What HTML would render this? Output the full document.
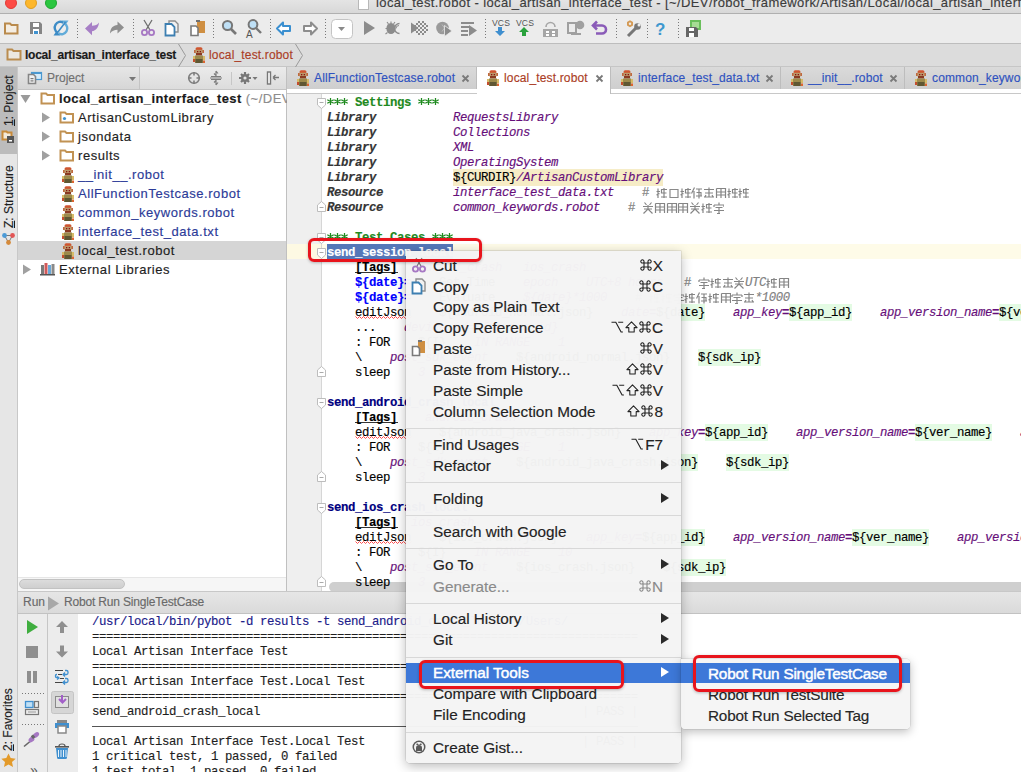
<!DOCTYPE html><html><head><meta charset="utf-8"><style>
*{box-sizing:border-box}
html,body{margin:0;padding:0}
body{width:1021px;height:772px;overflow:hidden;position:relative;background:#ececec;font-family:"Liberation Sans",sans-serif;color:#1e1e1e}
.a{position:absolute}
.ui{font-family:"Liberation Sans",sans-serif;font-size:13px;letter-spacing:.55px;white-space:pre;line-height:19px;-webkit-text-stroke:.15px currentColor}
.mono{font-family:"Liberation Mono",monospace;font-size:11.67px;line-height:15px;white-space:pre}
.ln{position:absolute;height:15px;line-height:15px;white-space:pre;font-family:"Liberation Mono",monospace;font-size:12.35px;letter-spacing:-.41px;color:#000;-webkit-text-stroke:.15px currentColor}
.h{color:#1f8a1f;font-weight:bold}
.kw{color:#353535;font-weight:bold;font-style:italic}
.ar{color:#660e7a;font-style:italic}
.cm{color:#808080}
.tc{color:#000080;font-weight:bold}
.tg{font-weight:bold}
.vb{color:#0000ff;font-weight:bold}
.gv{background:#e4fbe4}
.eq{color:#660e7a;font-weight:bold}
.cd{background:#f6ecc6}
.wv{}
.cj{display:inline-block;width:11.75px;height:11px;vertical-align:-1px;position:relative}
.cj:before{content:"";position:absolute;left:1px;right:1px;top:1px;bottom:0;border:1px solid #9a9a9a;border-left-width:1px;opacity:.85;background:linear-gradient(#9a9a9a,#9a9a9a) 50% 0/1px 100% no-repeat,linear-gradient(#9a9a9a,#9a9a9a) 0 45%/100% 1px no-repeat}
.menu{font-family:"Liberation Sans",sans-serif;font-size:15.3px;letter-spacing:0px;white-space:pre;color:#262626;-webkit-text-stroke:.15px currentColor}
</style></head><body>
<div class="a" style="left:0;top:0;width:1021px;height:14px;background:linear-gradient(#e4e4e4,#d8d8d8);border-bottom:1px solid #b0b0b0;overflow:hidden"><div class="a" style="left:5px;top:-3px;width:12px;height:12px;border-radius:6px;background:#fd4b45;border:.5px solid #df3b35"></div><div class="a" style="left:25px;top:-3px;width:12px;height:12px;border-radius:6px;background:#fdb72c;border:.5px solid #de9d22"></div><div class="a" style="left:45px;top:-3px;width:12px;height:12px;border-radius:6px;background:#2bc640;border:.5px solid #1fa52f"></div><div class="a" style="left:358px;top:-2px;width:11px;height:12px;background:#fff;border:1px solid #b8b8b8"></div><div class="a ui" style="left:376px;top:-7px;font-size:13px;letter-spacing:.39px;color:#3c3c3c">local_test.robot - local_artisan_interface_test - [~/DEV/robot_framework/Artisan/Local/local_artisan_interface_test]</div></div>
<div class="a" style="left:0;top:14px;width:1021px;height:30px;background:#ececec;border-bottom:1px solid #bdbdbd"></div>
<svg class="a" style="left:0;top:14px" width="1021" height="29"><path d="M5 9.5h5l1.5 1.5h6v8.5H5z" fill="#f4ede2" stroke="#b98a4c" stroke-width="2"/><path d="M30 8h10l2 2v10H30z" fill="#858585"/><rect x="33" y="9" width="6" height="4" fill="#fff"/><rect x="33" y="15" width="6" height="5" fill="#fff"/><rect x="34" y="17" width="4" height="3" fill="#3f92cf"/><path d="M63.5 8.6A5.6 5.6 0 0 0 57.5 18.5" fill="none" stroke="#3d8cc6" stroke-width="2.4"/><path d="M58.5 19.4A5.6 5.6 0 0 0 64.5 9.5" fill="none" stroke="#62acd9" stroke-width="2.4"/><path d="M62 6.5h6.5l-3 4.5z" fill="#62acd9"/><path d="M60 21.5h-6.5l3-4.5z" fill="#3d8cc6"/><path d="M65.5 8l-9 12" stroke="#3d8cc6" stroke-width="1.6"/><line x1="77.5" y1="5" x2="77.5" y2="26" stroke="#7a7a7a" stroke-width="1" stroke-dasharray="1 2"/><path d="M85 14.5l7-6.5v3.8c3.2 0 5.6-1.2 7-3.3-.4 4.8-3 8.2-7 8.8v4z" fill="#a77fc6"/><path d="M124 13.5l-6.5-6v3.5c-4.5.3-7.2 3.2-7.5 8.5 1.8-2.6 4.4-3.8 7.5-3.8v3.8z" fill="#8f8f8f"/><line x1="133.5" y1="5" x2="133.5" y2="26" stroke="#7a7a7a" stroke-width="1" stroke-dasharray="1 2"/><path d="M144 6l6 10M152 6l-6 10" stroke="#6f6f6f" stroke-width="1.3"/><circle cx="144.5" cy="18.5" r="2.6" fill="none" stroke="#a678c3" stroke-width="1.8"/><circle cx="151.5" cy="18.5" r="2.6" fill="none" stroke="#a678c3" stroke-width="1.8"/><path d="M169 7h6l3 3v8h-9z" fill="#f1f1f1" stroke="#8e8e8e" stroke-width="1.4"/><path d="M165.5 10h6l3 3v8.5h-9z" fill="#fff" stroke="#3d7fb1" stroke-width="1.8"/><rect x="197" y="7" width="8" height="12" fill="#cf8f42"/><rect x="196" y="6" width="4" height="2" fill="#707070"/><path d="M191 12h5l2 2v7.5h-7z" fill="#fff" stroke="#7a7a7a" stroke-width="1.6"/><line x1="213.5" y1="5" x2="213.5" y2="26" stroke="#7a7a7a" stroke-width="1" stroke-dasharray="1 2"/><circle cx="227.5" cy="11.5" r="4.6" fill="#bfe0f6" stroke="#777" stroke-width="2"/><path d="M231 15l5 5" stroke="#777" stroke-width="2.6"/><circle cx="253" cy="10.5" r="4.4" fill="#bfe0f6" stroke="#777" stroke-width="2"/><path d="M256 14l5 5" stroke="#777" stroke-width="2.4"/><text x="246" y="23.5" font-family="Liberation Sans" font-size="10" fill="#555">A</text><line x1="270.5" y1="5" x2="270.5" y2="26" stroke="#7a7a7a" stroke-width="1" stroke-dasharray="1 2"/><path d="M277 14.5l6-6v3.5h7v5h-7v3.5z" fill="#fff" stroke="#3a8fd0" stroke-width="2" stroke-linejoin="round"/><path d="M317 14.5l-6-6v3.5h-7v5h7v3.5z" fill="#fff" stroke="#8d8d8d" stroke-width="2" stroke-linejoin="round"/><line x1="325.5" y1="5" x2="325.5" y2="26" stroke="#7a7a7a" stroke-width="1" stroke-dasharray="1 2"/><rect x="331.5" y="5.5" width="21" height="19" rx="4" fill="#fff" stroke="#c4c4c4"/><path d="M338 13h7l-3.5 4z" fill="#8a8a8a"/><path d="M364 7l11 7-11 7z" fill="#8c8c8c"/><ellipse cx="391" cy="14.5" rx="4.6" ry="5.6" fill="#8c8c8c"/><path d="M387 8l1.5 2M395 8l-1.5 2M385.5 14.5h2M385.5 20l2-1.5M391 7.5v2" stroke="#8c8c8c" stroke-width="1.1"/><path d="M399.5 9.5a5 5 0 0 0 0 10" fill="none" stroke="#8c8c8c" stroke-width="1.4"/><path d="M396 14.5a3 3 0 0 1 3-3" fill="none" stroke="#8c8c8c" stroke-width="1"/><path d="M411 8.5l7.5 5.5-7.5 5.5z" fill="#8c8c8c"/><rect x="414" y="11" width="2" height="2" fill="#8c8c8c"/><rect x="414" y="15" width="2" height="2" fill="#8c8c8c"/><rect x="416" y="9" width="2" height="2" fill="#8c8c8c"/><rect x="416" y="13" width="2" height="2" fill="#8c8c8c"/><rect x="416" y="17" width="2" height="2" fill="#8c8c8c"/><rect x="418" y="7" width="2" height="2" fill="#8c8c8c"/><rect x="418" y="11" width="2" height="2" fill="#8c8c8c"/><rect x="418" y="15" width="2" height="2" fill="#8c8c8c"/><rect x="418" y="19" width="2" height="2" fill="#8c8c8c"/><rect x="420" y="9" width="2" height="2" fill="#8c8c8c"/><rect x="420" y="13" width="2" height="2" fill="#8c8c8c"/><rect x="420" y="17" width="2" height="2" fill="#8c8c8c"/><rect x="422" y="7" width="2" height="2" fill="#8c8c8c"/><rect x="422" y="11" width="2" height="2" fill="#8c8c8c"/><rect x="422" y="15" width="2" height="2" fill="#8c8c8c"/><rect x="422" y="19" width="2" height="2" fill="#8c8c8c"/><rect x="424" y="9" width="2" height="2" fill="#8c8c8c"/><rect x="424" y="13" width="2" height="2" fill="#8c8c8c"/><rect x="424" y="17" width="2" height="2" fill="#8c8c8c"/><rect x="426" y="11" width="2" height="2" fill="#8c8c8c"/><rect x="426" y="15" width="2" height="2" fill="#8c8c8c"/><circle cx="442.5" cy="14" r="6.3" fill="#9a9a9a"/><path d="M442 10.5l2.5 3.5-2.5 3.5" stroke="#bdbdbd" stroke-width="1" fill="none"/><path d="M444.5 11.5l7.5 5.5-7.5 5.5z" fill="#8c8c8c" stroke="#ececec" stroke-width=".8"/><path d="M461 8h13v2h-13zM461 12h9v2h-9zM461 16h7v2h-7zM461 20h7v2h-7z" fill="#8c8c8c"/><path d="M469 11l8 5.5-8 5.5z" fill="#8c8c8c"/><line x1="485.5" y1="5" x2="485.5" y2="26" stroke="#7a7a7a" stroke-width="1" stroke-dasharray="1 2"/><text x="492" y="11.5" font-family="Liberation Sans" font-size="8.6" fill="#555" letter-spacing=".1">VCS</text><path d="M498 13h4v4h3l-5 5-5-5h3z" fill="#3f8fcf"/><text x="516" y="11.5" font-family="Liberation Sans" font-size="8.6" fill="#555" letter-spacing=".1">VCS</text><path d="M522 22h4v-4h3l-5-5-5 5h3z" fill="#2aa23d"/><path d="M543 15h15v8h-15z" fill="#a6a6a6"/><rect x="546" y="17" width="3" height="2" fill="#fff"/><rect x="552" y="17" width="3" height="2" fill="#fff"/><rect x="546" y="20" width="3" height="2" fill="#fff"/><rect x="552" y="20" width="3" height="2" fill="#fff"/><path d="M546 13a4 4 0 0 1 9 0" fill="none" stroke="#a6a6a6" stroke-width="1.6"/><path d="M568 9h8v10h-8z" fill="none" stroke="#a0a0a0" stroke-width="2"/><path d="M571 20h10" stroke="#a0a0a0" stroke-width="2"/><circle cx="580" cy="11" r="4.3" fill="#a0a0a0"/><path d="M597 7.5l-4 4 4 4M594 11.5h8a4 4 0 0 1 0 8h-6" fill="none" stroke="#8a5bb8" stroke-width="2.6"/><line x1="616.5" y1="5" x2="616.5" y2="26" stroke="#7a7a7a" stroke-width="1" stroke-dasharray="1 2"/><path d="M627 8l3-1.7 3 1.7v3.5l-3 1.7-3-1.7z" fill="#d49a55"/><circle cx="630" cy="9.7" r="1.2" fill="#ececec"/><path d="M628 22l9-9" stroke="#777" stroke-width="3"/><circle cx="637.5" cy="12.5" r="3.3" fill="#777"/><circle cx="639" cy="11" r="1.5" fill="#ececec"/><line x1="647.5" y1="5" x2="647.5" y2="26" stroke="#7a7a7a" stroke-width="1" stroke-dasharray="1 2"/><text x="655" y="20.5" font-family="Liberation Sans" font-size="17" font-weight="bold" fill="#3e98cf">?</text><line x1="678.5" y1="5" x2="678.5" y2="26" stroke="#7a7a7a" stroke-width="1" stroke-dasharray="1 2"/><rect x="690" y="6" width="11" height="10" fill="#6abf5c"/><rect x="692" y="8" width="7" height="6" fill="#a7dd95"/><path d="M686 13h10l2 2v8h-12z" fill="#666"/><rect x="689" y="14" width="5" height="3" fill="#fff"/><rect x="689" y="19" width="5" height="4" fill="#fff"/></svg>
<svg width="0" height="0" style="position:absolute"><defs>
<g id="rb">
<rect x="3.5" y="0.3" width="7" height="3.5" rx="1.7" fill="#cf5530"/>
<rect x="2" y="3" width="2" height="3" fill="#c0683f"/><rect x="10" y="3" width="2" height="3" fill="#c0683f"/>
<rect x="3.5" y="2.8" width="7" height="3.7" fill="#b99a6c"/>
<rect x="5" y="4" width="1.3" height="1.3" fill="#8a1010"/><rect x="7.7" y="4" width="1.3" height="1.3" fill="#8a1010"/>
<rect x="4" y="6" width="6" height="2.5" fill="#8a3a22"/>
<rect x="3" y="8.5" width="8" height="7.5" fill="#9c8a4c"/>
<rect x="3.5" y="12" width="7" height="4" fill="#5f5733"/>
<rect x="1" y="9" width="2" height="3" fill="#d6bb68"/><rect x="1" y="12" width="2" height="3" fill="#c44d2e"/>
<rect x="11" y="9" width="2" height="4" fill="#d6bb68"/><rect x="11" y="13.5" width="2" height="2.5" fill="#de6530"/>
</g>
<g id="cT1"><path d="M2 1.5v9.5M0.5 4.5h3.5M0.5 8l3-1.5M5 2.5h6M5.5 6h5M5 10h6M8 1v10M5.5 2.5v4" fill="none" stroke="#858585" stroke-width="1.2"/></g>
<g id="cT2"><path d="M1.5 1.5h9v9.5M1.5 1.5v9.5M1.5 5h9M1.5 8h9M6 1.5v9.5" fill="none" stroke="#858585" stroke-width="1.2"/></g>
<g id="cT0"><path d="M2 2.5h8v8h-8z" fill="none" stroke="#8a8a8a" stroke-width="1.2"/></g>
<g id="cT3"><path d="M1 2.5h10M2 6h8M1 10h10M6 0.5v10M3 8l-1.5 2.5M9 8l1.5 2.5" fill="none" stroke="#858585" stroke-width="1.2"/></g>
<g id="cT4"><path d="M3.5 0.5l-3 6M3 4v7.5M5 2h6M5.5 5.5h5M8 2v9.5M5 9h6M10 5.5v4" fill="none" stroke="#858585" stroke-width="1.2"/></g>
<g id="cT5"><path d="M6 0.5v2M1 3h10M1 3v2M11 3v2M2.5 5.5h7M6 5.5v6M1 8.5h10M4 11.5h3" fill="none" stroke="#858585" stroke-width="1.2"/></g>
<g id="cT6"><path d="M2.5 0.5l2 2.5M9.5 0.5l-2 2.5M1 4.5h10M2 7h8M6 3v4M1.5 11.5l4.5-4.5 4.5 4.5" fill="none" stroke="#858585" stroke-width="1.2"/></g>
<g id="fold"><path d="M1.5 1.5h8v6.5l-4 3.5-4-3.5z" fill="#fff" stroke="#bdbdbd"/><path d="M3.5 5.5h4" stroke="#aaa"/></g>
<g id="foldend"><path d="M1.5 12.5h8v-6.5l-4-3.5-4 3.5z" fill="#fff" stroke="#bdbdbd"/><path d="M3.5 8.5h4" stroke="#aaa"/></g>
</defs></svg>
<div class="a" style="left:0;top:44px;width:1021px;height:23px;background:#dcdcdc;border-bottom:1px solid #c6c6c6"></div>
<svg class="a" style="left:0;top:43px" width="320" height="24"><path d="M7.5 6.5h4.5l1.5 1.5h7v8.5H7.5z" fill="#ece8e0" stroke="#ba8c4f" stroke-width="2"/><path d="M178.5 1l7 11.5-7 11.5" fill="none" stroke="#9a9a9a"/><path d="M295.5 1l7 11.5-7 11.5" fill="none" stroke="#9a9a9a"/></svg>
<div class="a ui" style="left:25px;top:46px;font-weight:bold;font-size:12px;letter-spacing:-.25px;color:#1a1a1a">local_artisan_interface_test</div>
<svg class="a" style="left:192px;top:47px" width="14" height="16"><use href="#rb"/></svg>
<div class="a ui" style="left:209px;top:46px;font-size:12px;letter-spacing:.16px;color:#ab3d26">local_test.robot</div>
<div class="a" style="left:0;top:67px;width:18px;height:705px;background:#e6e6e6;border-right:1px solid #c8c8c8"></div>
<div class="a" style="left:0;top:67px;width:17px;height:87px;background:#bcbcbc"></div>
<div class="a ui" style="left:1px;top:126px;transform-origin:0 0;transform:rotate(-90deg);font-size:12px;letter-spacing:0px;line-height:16px;color:#1e1e1e"><u>1</u>: Project</div>
<svg class="a" style="left:1px;top:129px" width="16" height="16"><path d="M1.5 2.5h4l1 1h4v7h-9z" fill="#f3eada" stroke="#c78a3a" stroke-width="2"/><rect x="6" y="7" width="7" height="7" fill="#555"/><rect x="8" y="11" width="3" height="1.5" fill="#fff"/></svg>
<div class="a ui" style="left:1px;top:228px;transform-origin:0 0;transform:rotate(-90deg);font-size:12px;letter-spacing:0px;line-height:16px;color:#1e1e1e"><u>Z</u>: Structure</div>
<svg class="a" style="left:1px;top:231px" width="15" height="15"><path d="M3.5 4.5h8M3.5 4.5l4 7 4-7" fill="none" stroke="#777" stroke-width="1"/><circle cx="3.5" cy="4.5" r="2.4" fill="#4a9ad6"/><circle cx="11.5" cy="4.5" r="2.4" fill="#e25555"/><circle cx="7.5" cy="11.5" r="2.4" fill="#d58a3a"/></svg>
<div class="a ui" style="left:0px;top:751px;transform-origin:0 0;transform:rotate(-90deg);font-size:12px;letter-spacing:0px;line-height:16px;color:#1e1e1e"><u>2</u>: Favorites</div>
<svg class="a" style="left:1px;top:753px" width="15" height="15"><path d="M7.5 0.5l2.2 4.6 5 .6-3.7 3.4 1 5-4.5-2.5-4.5 2.5 1-5L.3 5.7l5-.6z" fill="#e39a2a"/></svg>
<div class="a" style="left:18px;top:67px;width:269px;height:525px;background:#fff;border-right:1px solid #c0c0c0"></div>
<div class="a" style="left:18px;top:67px;width:268px;height:23px;background:linear-gradient(#ebebeb,#dcdcdc);border-bottom:1px solid #c4c4c4"></div>
<div class="a" style="left:18px;top:67px;width:122px;height:23px;background:linear-gradient(#e6e6e6,#d6d6d6);border-right:1px solid #c4c4c4;border-bottom:1px solid #c4c4c4"></div>
<svg class="a" style="left:18px;top:67px" width="268" height="23"><rect x="13.5" y="5.5" width="10" height="7" fill="#d4ebfa" stroke="#4a98d0" stroke-width="1.2"/><rect x="13.5" y="5" width="10" height="2" fill="#4a98d0"/><path d="M10.5 7.5h5l2 2v7h-7z" fill="#f2f2f2" stroke="#858585" stroke-width="1.6"/><rect x="12.5" y="11" width="3" height="1.2" fill="#777"/><rect x="12.5" y="13.3" width="3" height="1.2" fill="#777"/><path d="M111 10h7l-3.5 4z" fill="#777"/><circle cx="176" cy="11" r="5.3" fill="none" stroke="#7d7d7d" stroke-width="1.6"/><path d="M176 5v3.5M176 13.5v3.5M170 11h3.5M178.5 11h3.5" stroke="#7d7d7d" stroke-width="1.6"/><path d="M192 11h12M198 4v4.5l-2-2M198 4l2 2.5M198 18v-4.5l-2 2M198 18l2-2.5" stroke="#7d7d7d" stroke-width="1.2" fill="none"/><path d="M193 9.5h10M193 12.5h10" stroke="#7d7d7d" stroke-width="1"/><path d="M213.5 5v13" stroke="#c6c6c6"/><circle cx="227" cy="11" r="4" fill="#777"/><path d="M227 5v12M221 11h12M223 7l8 8M231 7l-8 8" stroke="#777" stroke-width="2.2"/><circle cx="227" cy="11" r="1.6" fill="#e2e2e2"/><path d="M234.5 10h5l-2.5 3z" fill="#777"/><rect x="249.5" y="5" width="3" height="12" fill="#fff" stroke="#777" stroke-width="1.4"/><path d="M255 10.5h6M255 10.5l2.5-2.5M255 10.5l2.5 2.5" stroke="#777" stroke-width="1.3" fill="none"/></svg>
<div class="a ui" style="left:47px;top:69px;font-size:12px;letter-spacing:0px;color:#707070">Project</div>
<div class="a" style="left:18px;top:241px;width:268px;height:19px;background:#d5d5d5"></div>
<svg class="a" style="left:20px;top:94px" width="11" height="10"><path d="M0.5 1h10l-5 8z" fill="#9a9a9a"/></svg>
<svg class="a" style="left:40px;top:91px" width="16" height="14"><path d="M1.5 2.5h4.5l1.5 1.5h6.5v8.5H1.5z" fill="#fff" stroke="#c19253" stroke-width="2"/></svg>
<div class="a ui" style="left:59px;top:89px;font-weight:bold;letter-spacing:.41px;color:#1a1a1a">local_artisan_interface_test<span style="font-weight:normal;color:#8d8d8d;letter-spacing:.5px;margin-left:4px">(~/DEV</span></div>
<svg class="a" style="left:41px;top:112px" width="10" height="11"><path d="M1 0.5v10l8-5z" fill="#a0a0a0"/></svg>
<svg class="a" style="left:59px;top:110px" width="16" height="14"><path d="M1.5 2.5h4.5l1.5 1.5h6.5v8.5H1.5z" fill="#fff" stroke="#c19253" stroke-width="2"/><circle cx="5.5" cy="8.5" r="1.6" fill="#3f93cf"/></svg>
<div class="a ui" style="left:78px;top:108px;color:#1e1e1e">ArtisanCustomLibrary</div>
<svg class="a" style="left:41px;top:131px" width="10" height="11"><path d="M1 0.5v10l8-5z" fill="#a0a0a0"/></svg>
<svg class="a" style="left:59px;top:129px" width="16" height="14"><path d="M1.5 2.5h4.5l1.5 1.5h6.5v8.5H1.5z" fill="#fff" stroke="#c19253" stroke-width="2"/></svg>
<div class="a ui" style="left:78px;top:127px;color:#1e1e1e">jsondata</div>
<svg class="a" style="left:41px;top:150px" width="10" height="11"><path d="M1 0.5v10l8-5z" fill="#a0a0a0"/></svg>
<svg class="a" style="left:59px;top:148px" width="16" height="14"><path d="M1.5 2.5h4.5l1.5 1.5h6.5v8.5H1.5z" fill="#fff" stroke="#c19253" stroke-width="2"/></svg>
<div class="a ui" style="left:78px;top:146px;color:#1e1e1e">results</div>
<svg class="a" style="left:61px;top:167px" width="14" height="16"><use href="#rb"/></svg>
<div class="a ui" style="left:78px;top:165px;color:#2c3b98">__init__.robot</div>
<svg class="a" style="left:61px;top:186px" width="14" height="16"><use href="#rb"/></svg>
<div class="a ui" style="left:78px;top:184px;color:#2c3b98">AllFunctionTestcase.robot</div>
<svg class="a" style="left:61px;top:205px" width="14" height="16"><use href="#rb"/></svg>
<div class="a ui" style="left:78px;top:203px;color:#2c3b98">common_keywords.robot</div>
<svg class="a" style="left:61px;top:224px" width="14" height="16"><use href="#rb"/></svg>
<div class="a ui" style="left:78px;top:222px;color:#2c3b98">interface_test_data.txt</div>
<svg class="a" style="left:61px;top:243px" width="14" height="16"><use href="#rb"/></svg>
<div class="a ui" style="left:78px;top:241px;color:#1e1e1e">local_test.robot</div>
<svg class="a" style="left:22px;top:264px" width="10" height="11"><path d="M1 0.5v10l8-5z" fill="#a0a0a0"/></svg>
<svg class="a" style="left:40px;top:262px" width="16" height="14"><rect x="1" y="3" width="3" height="10" fill="#7a7a7a"/><rect x="4.5" y="1" width="3" height="12" fill="#d25a5a"/><rect x="8" y="3" width="3" height="10" fill="#6aa8d8"/><rect x="11.5" y="2" width="3" height="11" fill="#8a8a8a"/><rect x="0" y="12" width="15" height="1.5" fill="#555"/></svg>
<div class="a ui" style="left:59px;top:260px;color:#1e1e1e">External Libraries</div>
<div class="a" style="left:18px;top:577px;width:268px;height:14px;background:#f6f6f6;border-top:1px solid #e6e6e6"></div>
<div class="a" style="left:19px;top:579px;width:106px;height:10px;border-radius:5px;background:linear-gradient(#dcdcdc,#cfcfcf);border:1px solid #c2c2c2"></div>
<div class="a" style="left:287px;top:67px;width:734px;height:27px;background:#d3d3d3"></div>
<div class="a" style="left:287px;top:89px;width:734px;height:5px;background:#fff;border-bottom:1px solid #c8c8c8"></div>
<div class="a" style="left:287px;top:67px;width:190px;height:22px;background:linear-gradient(#dadada,#cecece);border-right:1px solid #bdbdbd"></div>
<svg class="a" style="left:296px;top:70px" width="14" height="16"><use href="#rb"/></svg>
<div class="a ui" style="left:314px;top:69px;font-size:12px;letter-spacing:.15px;color:#2f52c0">AllFunctionTestcase.robot</div>
<svg class="a" style="left:461px;top:74px" width="9" height="9"><path d="M1.5 1.5l6 6M7.5 1.5l-6 6" stroke="#7a7a7a" stroke-width="1.8"/></svg>
<div class="a" style="left:477px;top:67px;width:134px;height:27px;background:#ffffff;border-right:1px solid #bdbdbd"></div>
<svg class="a" style="left:486px;top:70px" width="14" height="16"><use href="#rb"/></svg>
<div class="a ui" style="left:504px;top:69px;font-size:12px;letter-spacing:.15px;color:#ab3d26">local_test.robot</div>
<svg class="a" style="left:595px;top:74px" width="9" height="9"><path d="M1.5 1.5l6 6M7.5 1.5l-6 6" stroke="#7a7a7a" stroke-width="1.8"/></svg>
<div class="a" style="left:611px;top:67px;width:170px;height:22px;background:linear-gradient(#dadada,#cecece);border-right:1px solid #bdbdbd"></div>
<svg class="a" style="left:620px;top:70px" width="14" height="16"><use href="#rb"/></svg>
<div class="a ui" style="left:638px;top:69px;font-size:12px;letter-spacing:.15px;color:#2f52c0">interface_test_data.txt</div>
<svg class="a" style="left:765px;top:74px" width="9" height="9"><path d="M1.5 1.5l6 6M7.5 1.5l-6 6" stroke="#7a7a7a" stroke-width="1.8"/></svg>
<div class="a" style="left:781px;top:67px;width:124px;height:22px;background:linear-gradient(#dadada,#cecece);border-right:1px solid #bdbdbd"></div>
<svg class="a" style="left:790px;top:70px" width="14" height="16"><use href="#rb"/></svg>
<div class="a ui" style="left:808px;top:69px;font-size:12px;letter-spacing:.15px;color:#2f52c0">__init__.robot</div>
<svg class="a" style="left:889px;top:74px" width="9" height="9"><path d="M1.5 1.5l6 6M7.5 1.5l-6 6" stroke="#7a7a7a" stroke-width="1.8"/></svg>
<div class="a" style="left:905px;top:67px;width:155px;height:22px;background:linear-gradient(#dadada,#cecece);border-right:1px solid #bdbdbd"></div>
<svg class="a" style="left:914px;top:70px" width="14" height="16"><use href="#rb"/></svg>
<div class="a ui" style="left:932px;top:69px;font-size:12px;letter-spacing:.15px;color:#2f52c0">common_keywords.robot</div>
<div class="a" style="left:287px;top:94px;width:734px;height:498px;background:#fff"></div>
<div class="a" style="left:287px;top:94px;width:35px;height:498px;background:#efefef;border-right:1px solid #d6d6d6"></div>
<div class="a" style="left:287px;top:244px;width:34px;height:15px;background:#fdf9e3"></div>
<div class="a" style="left:322px;top:244px;width:699px;height:15px;background:#fefbe8"></div>
<svg class="a" style="left:327px;top:94px" width="21" height="15"><path d="M3.5 3.9v7.2M0.2999999999999998 5.7l6.4 3.6M0.2999999999999998 9.3l6.4-3.6M10.5 3.9v7.2M7.3 5.7l6.4 3.6M7.3 9.3l6.4-3.6M17.5 3.9v7.2M14.3 5.7l6.4 3.6M14.3 9.3l6.4-3.6" stroke="#1f8a1f" stroke-width="1.25" fill="none"/></svg>
<svg class="a" style="left:418px;top:94px" width="21" height="15"><path d="M3.5 3.9v7.2M0.2999999999999998 5.7l6.4 3.6M0.2999999999999998 9.3l6.4-3.6M10.5 3.9v7.2M7.3 5.7l6.4 3.6M7.3 9.3l6.4-3.6M17.5 3.9v7.2M14.3 5.7l6.4 3.6M14.3 9.3l6.4-3.6" stroke="#1f8a1f" stroke-width="1.25" fill="none"/></svg>
<div class="a" style="left:453px;top:169px;width:63px;height:15px;background:#f6edc8"></div>
<div class="a" style="left:516px;top:169px;width:147px;height:15px;background:#f6edc8"></div>
<svg class="a" style="left:327px;top:229px" width="21" height="15"><path d="M3.5 3.9v7.2M0.2999999999999998 5.7l6.4 3.6M0.2999999999999998 9.3l6.4-3.6M10.5 3.9v7.2M7.3 5.7l6.4 3.6M7.3 9.3l6.4-3.6M17.5 3.9v7.2M14.3 5.7l6.4 3.6M14.3 9.3l6.4-3.6" stroke="#1f8a1f" stroke-width="1.25" fill="none"/></svg>
<svg class="a" style="left:432px;top:229px" width="21" height="15"><path d="M3.5 3.9v7.2M0.2999999999999998 5.7l6.4 3.6M0.2999999999999998 9.3l6.4-3.6M10.5 3.9v7.2M7.3 5.7l6.4 3.6M7.3 9.3l6.4-3.6M17.5 3.9v7.2M14.3 5.7l6.4 3.6M14.3 9.3l6.4-3.6" stroke="#1f8a1f" stroke-width="1.25" fill="none"/></svg>
<div class="a" style="left:327px;top:244px;width:126px;height:15px;background:#5577b8"></div>
<div class="a" style="left:439px;top:304px;width:154px;height:15px;background:#e3fbe3"></div>
<div class="a" style="left:656px;top:304px;width:49px;height:15px;background:#e3fbe3"></div>
<div class="a" style="left:789px;top:304px;width:63px;height:15px;background:#e3fbe3"></div>
<div class="a" style="left:999px;top:304px;width:77px;height:15px;background:#e3fbe3"></div>
<div class="a" style="left:516px;top:349px;width:154px;height:15px;background:#e3fbe3"></div>
<div class="a" style="left:698px;top:349px;width:63px;height:15px;background:#e3fbe3"></div>
<div class="a" style="left:439px;top:424px;width:182px;height:15px;background:#e3fbe3"></div>
<div class="a" style="left:705px;top:424px;width:63px;height:15px;background:#e3fbe3"></div>
<div class="a" style="left:915px;top:424px;width:77px;height:15px;background:#e3fbe3"></div>
<div class="a" style="left:516px;top:454px;width:182px;height:15px;background:#e3fbe3"></div>
<div class="a" style="left:726px;top:454px;width:63px;height:15px;background:#e3fbe3"></div>
<div class="a" style="left:439px;top:529px;width:119px;height:15px;background:#e3fbe3"></div>
<div class="a" style="left:642px;top:529px;width:63px;height:15px;background:#e3fbe3"></div>
<div class="a" style="left:852px;top:529px;width:77px;height:15px;background:#e3fbe3"></div>
<div class="a" style="left:516px;top:559px;width:119px;height:15px;background:#e3fbe3"></div>
<div class="a" style="left:663px;top:559px;width:63px;height:15px;background:#e3fbe3"></div>
<svg class="a" style="left:355px;top:304px" width="57" height="15"><polyline points="0.5,12.5 2.5,14.5 4.5,12.5 6.5,14.5 8.5,12.5 10.5,14.5 12.5,12.5 14.5,14.5 16.5,12.5 18.5,14.5 20.5,12.5 22.5,14.5 24.5,12.5 26.5,14.5 28.5,12.5 30.5,14.5 32.5,12.5 34.5,14.5 36.5,12.5 38.5,14.5 40.5,12.5 42.5,14.5 44.5,12.5 46.5,14.5 48.5,12.5 50.5,14.5 52.5,12.5 54.5,14.5 56.5,12.5" fill="none" stroke="#ff4d4d" stroke-width="1"/></svg>
<svg class="a" style="left:355px;top:424px" width="57" height="15"><polyline points="0.5,12.5 2.5,14.5 4.5,12.5 6.5,14.5 8.5,12.5 10.5,14.5 12.5,12.5 14.5,14.5 16.5,12.5 18.5,14.5 20.5,12.5 22.5,14.5 24.5,12.5 26.5,14.5 28.5,12.5 30.5,14.5 32.5,12.5 34.5,14.5 36.5,12.5 38.5,14.5 40.5,12.5 42.5,14.5 44.5,12.5 46.5,14.5 48.5,12.5 50.5,14.5 52.5,12.5 54.5,14.5 56.5,12.5" fill="none" stroke="#ff4d4d" stroke-width="1"/></svg>
<svg class="a" style="left:355px;top:529px" width="57" height="15"><polyline points="0.5,12.5 2.5,14.5 4.5,12.5 6.5,14.5 8.5,12.5 10.5,14.5 12.5,12.5 14.5,14.5 16.5,12.5 18.5,14.5 20.5,12.5 22.5,14.5 24.5,12.5 26.5,14.5 28.5,12.5 30.5,14.5 32.5,12.5 34.5,14.5 36.5,12.5 38.5,14.5 40.5,12.5 42.5,14.5 44.5,12.5 46.5,14.5 48.5,12.5 50.5,14.5 52.5,12.5 54.5,14.5 56.5,12.5" fill="none" stroke="#ff4d4d" stroke-width="1"/></svg>
<div class="a" style="left:355px;top:272px;width:43px;height:1px;background:#333"></div>
<div class="a" style="left:355px;top:422px;width:43px;height:1px;background:#333"></div>
<div class="a" style="left:355px;top:527px;width:43px;height:1px;background:#333"></div>
<div class="a" style="left:329px;top:582px;width:692px;height:10px;background:#cfcfcf;border-radius:5px 0 0 5px"></div>
<div class="ln h" style="left:327.0px;top:96px;">    Settings    </div>
<div class="ln kw" style="left:327.0px;top:111px;">Library</div>
<div class="ln ar" style="left:453.0px;top:111px;">RequestsLibrary</div>
<div class="ln kw" style="left:327.0px;top:126px;">Library</div>
<div class="ln ar" style="left:453.0px;top:126px;">Collections</div>
<div class="ln kw" style="left:327.0px;top:141px;">Library</div>
<div class="ln ar" style="left:453.0px;top:141px;">XML</div>
<div class="ln kw" style="left:327.0px;top:156px;">Library</div>
<div class="ln ar" style="left:453.0px;top:156px;">OperatingSystem</div>
<div class="ln kw" style="left:327.0px;top:171px;">Library</div>
<div class="ln cd" style="left:453.0px;top:171px;">${CURDIR}</div>
<div class="ln ar cd" style="left:516.0px;top:171px;">/ArtisanCustomLibrary</div>
<div class="ln kw" style="left:327.0px;top:186px;">Resource</div>
<div class="ln ar" style="left:453.0px;top:186px;">interface_test_data.txt</div>
<div class="ln cm" style="left:642.0px;top:186px;"># <svg width="11.75" height="15" style="vertical-align:top"><g transform="translate(0 1)"><use href="#cT1"/></g></svg><svg width="11.75" height="15" style="vertical-align:top"><g transform="translate(0 1)"><use href="#cT0"/></g></svg><svg width="11.75" height="15" style="vertical-align:top"><g transform="translate(0 1)"><use href="#cT1"/></g></svg><svg width="11.75" height="15" style="vertical-align:top"><g transform="translate(0 1)"><use href="#cT4"/></g></svg><svg width="11.75" height="15" style="vertical-align:top"><g transform="translate(0 1)"><use href="#cT3"/></g></svg><svg width="11.75" height="15" style="vertical-align:top"><g transform="translate(0 1)"><use href="#cT2"/></g></svg><svg width="11.75" height="15" style="vertical-align:top"><g transform="translate(0 1)"><use href="#cT1"/></g></svg><svg width="11.75" height="15" style="vertical-align:top"><g transform="translate(0 1)"><use href="#cT1"/></g></svg></div>
<div class="ln kw" style="left:327.0px;top:201px;">Resource</div>
<div class="ln ar" style="left:453.0px;top:201px;">common_keywords.robot</div>
<div class="ln cm" style="left:628.0px;top:201px;"># <svg width="11.75" height="15" style="vertical-align:top"><g transform="translate(0 1)"><use href="#cT6"/></g></svg><svg width="11.75" height="15" style="vertical-align:top"><g transform="translate(0 1)"><use href="#cT2"/></g></svg><svg width="11.75" height="15" style="vertical-align:top"><g transform="translate(0 1)"><use href="#cT2"/></g></svg><svg width="11.75" height="15" style="vertical-align:top"><g transform="translate(0 1)"><use href="#cT2"/></g></svg><svg width="11.75" height="15" style="vertical-align:top"><g transform="translate(0 1)"><use href="#cT6"/></g></svg><svg width="11.75" height="15" style="vertical-align:top"><g transform="translate(0 1)"><use href="#cT1"/></g></svg><svg width="11.75" height="15" style="vertical-align:top"><g transform="translate(0 1)"><use href="#cT5"/></g></svg></div>
<div class="ln h" style="left:327.0px;top:231px;">    Test Cases    </div>
<div class="ln tc" style="left:327.0px;top:246px;color:#fff">send_session_local</div>
<div class="ln tg" style="left:355.0px;top:261px;">[Tags]</div>
<div class="ln ar" style="left:411.0px;top:261px;">android_crash</div>
<div class="ln ar" style="left:523.0px;top:261px;">ios_crash</div>
<div class="ln vb" style="left:355.0px;top:276px;">${date}=</div>
<div class="ln " style="left:439.0px;top:276px;">Get Time</div>
<div class="ln ar" style="left:523.0px;top:276px;">epoch</div>
<div class="ln ar" style="left:586.0px;top:276px;">UTC+8 hours</div>
<div class="ln cm" style="left:684.0px;top:276px;"># <svg width="11.75" height="15" style="vertical-align:top"><g transform="translate(0 1)"><use href="#cT5"/></g></svg><svg width="11.75" height="15" style="vertical-align:top"><g transform="translate(0 1)"><use href="#cT1"/></g></svg><svg width="11.75" height="15" style="vertical-align:top"><g transform="translate(0 1)"><use href="#cT3"/></g></svg><svg width="11.75" height="15" style="vertical-align:top"><g transform="translate(0 1)"><use href="#cT6"/></g></svg><i>UTC</i><svg width="11.75" height="15" style="vertical-align:top"><g transform="translate(0 1)"><use href="#cT1"/></g></svg><svg width="11.75" height="15" style="vertical-align:top"><g transform="translate(0 1)"><use href="#cT2"/></g></svg></div>
<div class="ln vb" style="left:355.0px;top:291px;">${date}=</div>
<div class="ln " style="left:439.0px;top:291px;">Evaluate</div>
<div class="ln ar" style="left:523.0px;top:291px;">${date}*1000</div>
<div class="ln cm" style="left:635.0px;top:291px;"># <svg width="11.75" height="15" style="vertical-align:top"><g transform="translate(0 1)"><use href="#cT1"/></g></svg><svg width="11.75" height="15" style="vertical-align:top"><g transform="translate(0 1)"><use href="#cT1"/></g></svg><svg width="11.75" height="15" style="vertical-align:top"><g transform="translate(0 1)"><use href="#cT5"/></g></svg><svg width="11.75" height="15" style="vertical-align:top"><g transform="translate(0 1)"><use href="#cT1"/></g></svg><svg width="11.75" height="15" style="vertical-align:top"><g transform="translate(0 1)"><use href="#cT4"/></g></svg><svg width="11.75" height="15" style="vertical-align:top"><g transform="translate(0 1)"><use href="#cT1"/></g></svg><svg width="11.75" height="15" style="vertical-align:top"><g transform="translate(0 1)"><use href="#cT2"/></g></svg><svg width="11.75" height="15" style="vertical-align:top"><g transform="translate(0 1)"><use href="#cT5"/></g></svg><svg width="11.75" height="15" style="vertical-align:top"><g transform="translate(0 1)"><use href="#cT3"/></g></svg><i>*1000</i></div>
<div class="ln wv" style="left:355.0px;top:306px;">editJson</div>
<div class="ln gv" style="left:439.0px;top:306px;">${android_normal.json}</div>
<div class="ln ar" style="left:621.0px;top:306px;">date</div>
<div class="ln eq" style="left:649.0px;top:306px;">=</div>
<div class="ln gv" style="left:656.0px;top:306px;">${date}</div>
<div class="ln ar" style="left:733.0px;top:306px;">app_key</div>
<div class="ln eq" style="left:782.0px;top:306px;">=</div>
<div class="ln gv" style="left:789.0px;top:306px;">${app_id}</div>
<div class="ln ar" style="left:880.0px;top:306px;">app_version_name</div>
<div class="ln eq" style="left:992.0px;top:306px;">=</div>
<div class="ln gv" style="left:999.0px;top:306px;">${ver_name}</div>
<div class="ln " style="left:355.0px;top:321px;">...</div>
<div class="ln ar" style="left:404.0px;top:321px;">device_id=${device_id}</div>
<div class="ln " style="left:355.0px;top:336px;">: FOR</div>
<div class="ln " style="left:418.0px;top:336px;">${I}</div>
<div class="ln ar" style="left:474.0px;top:336px;">IN RANGE</div>
<div class="ln ar" style="left:558.0px;top:336px;">1</div>
<div class="ln " style="left:355.0px;top:351px;">\</div>
<div class="ln ar" style="left:390.0px;top:351px;">post_sdk_event</div>
<div class="ln gv" style="left:516.0px;top:351px;">${android_normal.json}</div>
<div class="ln gv" style="left:698.0px;top:351px;">${sdk_ip}</div>
<div class="ln " style="left:355.0px;top:366px;">sleep</div>
<div class="ln ar" style="left:418.0px;top:366px;">3</div>
<div class="ln tc" style="left:327.0px;top:396px;">send_android_crash_local</div>
<div class="ln tg" style="left:355.0px;top:411px;">[Tags]</div>
<div class="ln ar" style="left:425.0px;top:411px;">android_crash</div>
<div class="ln wv" style="left:355.0px;top:426px;">editJson</div>
<div class="ln gv" style="left:439.0px;top:426px;">${android_java_crash.json}</div>
<div class="ln ar" style="left:649.0px;top:426px;">app_key</div>
<div class="ln eq" style="left:698.0px;top:426px;">=</div>
<div class="ln gv" style="left:705.0px;top:426px;">${app_id}</div>
<div class="ln ar" style="left:796.0px;top:426px;">app_version_name</div>
<div class="ln eq" style="left:908.0px;top:426px;">=</div>
<div class="ln gv" style="left:915.0px;top:426px;">${ver_name}</div>
<div class="ln ar" style="left:1020.0px;top:426px;">app_version_code</div>
<div class="ln " style="left:355.0px;top:441px;">: FOR</div>
<div class="ln " style="left:418.0px;top:441px;">${I}</div>
<div class="ln ar" style="left:474.0px;top:441px;">IN RANGE</div>
<div class="ln ar" style="left:558.0px;top:441px;">1</div>
<div class="ln " style="left:355.0px;top:456px;">\</div>
<div class="ln ar" style="left:390.0px;top:456px;">post_sdk_event</div>
<div class="ln gv" style="left:516.0px;top:456px;">${android_java_crash.json}</div>
<div class="ln gv" style="left:726.0px;top:456px;">${sdk_ip}</div>
<div class="ln " style="left:355.0px;top:471px;">sleep</div>
<div class="ln ar" style="left:418.0px;top:471px;">3</div>
<div class="ln tc" style="left:327.0px;top:501px;">send_ios_crash_local</div>
<div class="ln tg" style="left:355.0px;top:516px;">[Tags]</div>
<div class="ln ar" style="left:411.0px;top:516px;">ios_crash</div>
<div class="ln wv" style="left:355.0px;top:531px;">editJson</div>
<div class="ln gv" style="left:439.0px;top:531px;">${ios_crash.json}</div>
<div class="ln ar" style="left:586.0px;top:531px;">app_key</div>
<div class="ln eq" style="left:635.0px;top:531px;">=</div>
<div class="ln gv" style="left:642.0px;top:531px;">${app_id}</div>
<div class="ln ar" style="left:733.0px;top:531px;">app_version_name</div>
<div class="ln eq" style="left:845.0px;top:531px;">=</div>
<div class="ln gv" style="left:852.0px;top:531px;">${ver_name}</div>
<div class="ln ar" style="left:957.0px;top:531px;">app_version_code</div>
<div class="ln " style="left:355.0px;top:546px;">: FOR</div>
<div class="ln " style="left:418.0px;top:546px;">${I}</div>
<div class="ln ar" style="left:474.0px;top:546px;">IN RANGE</div>
<div class="ln ar" style="left:558.0px;top:546px;">10</div>
<div class="ln " style="left:355.0px;top:561px;">\</div>
<div class="ln ar" style="left:390.0px;top:561px;">post_sdk_event</div>
<div class="ln gv" style="left:516.0px;top:561px;">${ios_crash.json}</div>
<div class="ln gv" style="left:663.0px;top:561px;">${sdk_ip}</div>
<div class="ln " style="left:355.0px;top:576px;">sleep</div>
<div class="ln ar" style="left:418.0px;top:576px;">3</div>
<svg class="a" style="left:316px;top:97px" width="11" height="14"><use href="#fold"/></svg>
<svg class="a" style="left:316px;top:232px" width="11" height="14"><use href="#fold"/></svg>
<svg class="a" style="left:316px;top:247px" width="11" height="14"><use href="#fold"/></svg>
<svg class="a" style="left:316px;top:397px" width="11" height="14"><use href="#fold"/></svg>
<svg class="a" style="left:316px;top:502px" width="11" height="14"><use href="#fold"/></svg>
<svg class="a" style="left:316px;top:199px" width="11" height="14"><use href="#foldend"/></svg>
<svg class="a" style="left:316px;top:364px" width="11" height="14"><use href="#foldend"/></svg>
<svg class="a" style="left:316px;top:469px" width="11" height="14"><use href="#foldend"/></svg>
<svg class="a" style="left:316px;top:574px" width="11" height="14"><use href="#foldend"/></svg>
<div class="a" style="left:18px;top:591px;width:1003px;height:23px;background:linear-gradient(#e6e6e6,#dadada);border-top:1px solid #c8c8c8;border-bottom:1px solid #c2c2c2"></div>
<div class="a ui" style="left:23px;top:593px;font-size:12px;letter-spacing:0px;color:#6a6a6a">Run</div>
<svg class="a" style="left:47px;top:596px" width="14" height="15"><path d="M1 0.5l11 7-11 7z" fill="#a8a8a8"/></svg>
<div class="a ui" style="left:64px;top:593px;font-size:12px;letter-spacing:-.17px;color:#6a6a6a">Robot Run SingleTestCase</div>
<div class="a" style="left:18px;top:614px;width:30px;height:158px;background:#ececec;border-right:1px solid #c6c6c6"></div>
<div class="a" style="left:48px;top:614px;width:30px;height:158px;background:#ececec"></div>
<div class="a" style="left:78px;top:614px;width:943px;height:158px;background:#fff"></div>
<svg class="a" style="left:0;top:0" width="100" height="772"><path d="M27 620l11 7-11 7z" fill="#3fae3f"/><rect x="26" y="646" width="12" height="12" fill="#8f8f8f"/><rect x="27" y="671" width="4" height="12" fill="#8f8f8f"/><rect x="33" y="671" width="4" height="12" fill="#8f8f8f"/><path d="M22 693.5h23" stroke="#777" stroke-dasharray="1 2"/><rect x="25.5" y="701.5" width="7.5" height="6" fill="#bfe0f6" stroke="#3f8fcf" stroke-width="1.3"/><rect x="34.5" y="701.5" width="4" height="6" fill="none" stroke="#777" stroke-width="1.2"/><rect x="25.5" y="709.5" width="13" height="5" fill="none" stroke="#777" stroke-width="1.2"/><path d="M28 712h8" stroke="#999"/><path d="M22 724.5h23" stroke="#777" stroke-dasharray="1 2"/><path d="M24 746.5l6-5" stroke="#666" stroke-width="1.6"/><ellipse cx="31.5" cy="739.5" rx="3.2" ry="2.4" transform="rotate(-40 31.5 739.5)" fill="#a678c3"/><ellipse cx="36" cy="735" rx="3.6" ry="2.2" transform="rotate(-40 36 735)" fill="#a678c3"/><rect x="31.5" y="735" width="3" height="3.5" transform="rotate(-40 33 736.7)" fill="#666"/><text x="30" y="775" font-family="Liberation Sans" font-size="14" fill="#555">»</text><path d="M62 621l6 6h-4v6h-4v-6h-4z" fill="#8f8f8f"/><path d="M62 657.5l6-6h-4v-6h-4v6h-4z" fill="#8f8f8f"/><path d="M55 670.5h8M58 674.5h4M60 678.5h4M55 682.5h8" stroke="#444" stroke-width="1"/><path d="M65 670.5h1.5a1.5 1.5 0 0 1 1.5 1.5v1a1.5 1.5 0 0 1-1.5 1.5H63M65 672.5l-2 2 2 2M57 674.5h-.5a1 1 0 0 0-1 1v1a1 1 0 0 0 1 1H59M57 676.5l2 1.5-2 1.5M65 678.5h1.5a1.5 1.5 0 0 1 1.5 1.5v1a1.5 1.5 0 0 1-1.5 1.5H63M65 680.5l-2 2 2 2" stroke="#3f8fcf" stroke-width="1.3" fill="none"/><rect x="51.5" y="691.5" width="22" height="22" rx="2" fill="#d6d6d6" stroke="#c4c4c4"/><rect x="55.5" y="696.5" width="13" height="11" fill="#e0e0e0" stroke="#8a8a8a"/><path d="M62 695v7M59 699l3.5 3.5 3.5-3.5" stroke="#a25fc8" stroke-width="2" fill="none"/><rect x="57" y="720" width="10" height="3" fill="#888"/><rect x="55" y="723" width="14" height="5" fill="#3f8fcf"/><rect x="58" y="726" width="8" height="7" fill="#fff" stroke="#888" stroke-width="1.5"/><rect x="55" y="746" width="14" height="1.6" fill="#555"/><path d="M59 746a3 2 0 0 1 6 0" fill="none" stroke="#555" stroke-width="1.2"/><path d="M56 748h12l-1 9.5a1.5 1.5 0 0 1-1.5 1.5h-7a1.5 1.5 0 0 1-1.5-1.5z" fill="#3f8fcf"/><path d="M58.5 750v7M61 750v7M63.5 750v7M66 750v7" stroke="#fff" stroke-width=".9"/></svg>
<div class="ln" style="left:92px;top:615px;color:#20208a">/usr/local/bin/pybot -d results -t send_android_crash_local  /Users/</div>
<div class="ln" style="left:92px;top:630px;color:#1e1e1e">==============================================================================</div>
<div class="ln" style="left:92px;top:645px;color:#1e1e1e">Local Artisan Interface Test</div>
<div class="ln" style="left:92px;top:660px;color:#1e1e1e">==============================================================================</div>
<div class="ln" style="left:92px;top:675px;color:#1e1e1e">Local Artisan Interface Test.Local Test</div>
<div class="ln" style="left:92px;top:690px;color:#1e1e1e">==============================================================================</div>
<div class="ln" style="left:92px;top:705px;color:#1e1e1e">send_android_crash_local</div>
<div class="ln" style="left:582px;top:705px;color:#1e1e1e">| PASS |</div>
<div class="a" style="left:92px;top:726px;width:546px;height:1px;background:#555"></div>
<div class="ln" style="left:92px;top:735px;color:#1e1e1e">Local Artisan Interface Test.Local Test</div>
<div class="ln" style="left:582px;top:735px;color:#1e1e1e">| PASS |</div>
<div class="ln" style="left:92px;top:750px;color:#1e1e1e">1 critical test, 1 passed, 0 failed</div>
<div class="ln" style="left:92px;top:765px;color:#1e1e1e">1 test total, 1 passed, 0 failed</div>
<div class="a" style="left:406px;top:251px;width:275px;height:512px;background:rgba(244,244,244,.98);box-shadow:0 3px 12px rgba(0,0,0,.28),0 0 0 .5px rgba(0,0,0,.15);border-radius:0 0 4px 4px"></div>
<div class="a menu" style="left:433px;top:257px;line-height:18px;color:#222">Cut</div>
<div class="a menu" style="right:358px;top:257px;height:18px;line-height:18px;letter-spacing:0;color:#222;display:flex;align-items:center"><span style="display:flex;align-items:center;margin-top:-1px"><svg width="12" height="12" style="margin-right:1px;margin-top:-1px"><g fill="none" stroke="#222" stroke-width="1.1"><path d="M4 4h4v4H4z"/><path d="M4 4V2.5A1.6 1.6 0 1 0 2.5 4H4M8 4V2.5A1.6 1.6 0 1 1 9.5 4H8M4 8v1.5A1.6 1.6 0 1 1 2.5 8H4M8 8v1.5A1.6 1.6 0 1 0 9.5 8H8"/></g></svg><span>X</span></span></div>
<svg class="a" style="left:411px;top:257px" width="16" height="16"><path d="M5 1l5 8M11 1l-5 8" stroke="#777" stroke-width="1.2"/><circle cx="4.5" cy="12" r="2.6" fill="none" stroke="#a678c3" stroke-width="1.8"/><circle cx="11.5" cy="12" r="2.6" fill="none" stroke="#a678c3" stroke-width="1.8"/></svg>
<div class="a menu" style="left:433px;top:278px;line-height:18px;color:#222">Copy</div>
<div class="a menu" style="right:358px;top:278px;height:18px;line-height:18px;letter-spacing:0;color:#222;display:flex;align-items:center"><span style="display:flex;align-items:center;margin-top:-1px"><svg width="12" height="12" style="margin-right:1px;margin-top:-1px"><g fill="none" stroke="#222" stroke-width="1.1"><path d="M4 4h4v4H4z"/><path d="M4 4V2.5A1.6 1.6 0 1 0 2.5 4H4M8 4V2.5A1.6 1.6 0 1 1 9.5 4H8M4 8v1.5A1.6 1.6 0 1 1 2.5 8H4M8 8v1.5A1.6 1.6 0 1 0 9.5 8H8"/></g></svg><span>C</span></span></div>
<svg class="a" style="left:411px;top:278px" width="16" height="17"><path d="M5 1h6l3 3v9H5z" fill="#f1f1f1" stroke="#8e8e8e" stroke-width="1.4"/><path d="M1.5 4.5h6l3 3v8h-9z" fill="#fff" stroke="#3d7fb1" stroke-width="1.8"/></svg>
<div class="a menu" style="left:433px;top:298px;line-height:18px;color:#222">Copy as Plain Text</div>
<div class="a menu" style="left:433px;top:319px;line-height:18px;color:#222">Copy Reference</div>
<div class="a menu" style="right:358px;top:319px;height:18px;line-height:18px;letter-spacing:0;color:#222;display:flex;align-items:center"><span style="display:flex;align-items:center;margin-top:-1px"><svg width="13" height="12" style="margin-right:1px;margin-top:-1px"><path d="M0.5 1.2h4.3l5.3 9.8h1.8M7.2 1.2h5" fill="none" stroke="#222" stroke-width="1.15"/></svg><svg width="13" height="12" style="margin-right:1px;margin-top:-1px"><path d="M6.5 0.8l5.6 5.8H9.2v4.4H3.8V6.6H0.9z" fill="none" stroke="#222" stroke-width="1.05" stroke-linejoin="round"/></svg><svg width="12" height="12" style="margin-right:1px;margin-top:-1px"><g fill="none" stroke="#222" stroke-width="1.1"><path d="M4 4h4v4H4z"/><path d="M4 4V2.5A1.6 1.6 0 1 0 2.5 4H4M8 4V2.5A1.6 1.6 0 1 1 9.5 4H8M4 8v1.5A1.6 1.6 0 1 1 2.5 8H4M8 8v1.5A1.6 1.6 0 1 0 9.5 8H8"/></g></svg><span>C</span></span></div>
<div class="a menu" style="left:433px;top:340px;line-height:18px;color:#222">Paste</div>
<div class="a menu" style="right:358px;top:340px;height:18px;line-height:18px;letter-spacing:0;color:#222;display:flex;align-items:center"><span style="display:flex;align-items:center;margin-top:-1px"><svg width="12" height="12" style="margin-right:1px;margin-top:-1px"><g fill="none" stroke="#222" stroke-width="1.1"><path d="M4 4h4v4H4z"/><path d="M4 4V2.5A1.6 1.6 0 1 0 2.5 4H4M8 4V2.5A1.6 1.6 0 1 1 9.5 4H8M4 8v1.5A1.6 1.6 0 1 1 2.5 8H4M8 8v1.5A1.6 1.6 0 1 0 9.5 8H8"/></g></svg><span>V</span></span></div>
<svg class="a" style="left:411px;top:340px" width="16" height="17"><rect x="7" y="1" width="7" height="12" fill="#cf8f42"/><rect x="7" y="0" width="4" height="2" fill="#777"/><path d="M1.5 6.5h5l2 2v7h-7z" fill="#fff" stroke="#7a7a7a" stroke-width="1.6"/></svg>
<div class="a menu" style="left:433px;top:361px;line-height:18px;color:#222">Paste from History...</div>
<div class="a menu" style="right:358px;top:361px;height:18px;line-height:18px;letter-spacing:0;color:#222;display:flex;align-items:center"><span style="display:flex;align-items:center;margin-top:-1px"><svg width="13" height="12" style="margin-right:1px;margin-top:-1px"><path d="M6.5 0.8l5.6 5.8H9.2v4.4H3.8V6.6H0.9z" fill="none" stroke="#222" stroke-width="1.05" stroke-linejoin="round"/></svg><svg width="12" height="12" style="margin-right:1px;margin-top:-1px"><g fill="none" stroke="#222" stroke-width="1.1"><path d="M4 4h4v4H4z"/><path d="M4 4V2.5A1.6 1.6 0 1 0 2.5 4H4M8 4V2.5A1.6 1.6 0 1 1 9.5 4H8M4 8v1.5A1.6 1.6 0 1 1 2.5 8H4M8 8v1.5A1.6 1.6 0 1 0 9.5 8H8"/></g></svg><span>V</span></span></div>
<div class="a menu" style="left:433px;top:382px;line-height:18px;color:#222">Paste Simple</div>
<div class="a menu" style="right:358px;top:382px;height:18px;line-height:18px;letter-spacing:0;color:#222;display:flex;align-items:center"><span style="display:flex;align-items:center;margin-top:-1px"><svg width="13" height="12" style="margin-right:1px;margin-top:-1px"><path d="M0.5 1.2h4.3l5.3 9.8h1.8M7.2 1.2h5" fill="none" stroke="#222" stroke-width="1.15"/></svg><svg width="13" height="12" style="margin-right:1px;margin-top:-1px"><path d="M6.5 0.8l5.6 5.8H9.2v4.4H3.8V6.6H0.9z" fill="none" stroke="#222" stroke-width="1.05" stroke-linejoin="round"/></svg><svg width="12" height="12" style="margin-right:1px;margin-top:-1px"><g fill="none" stroke="#222" stroke-width="1.1"><path d="M4 4h4v4H4z"/><path d="M4 4V2.5A1.6 1.6 0 1 0 2.5 4H4M8 4V2.5A1.6 1.6 0 1 1 9.5 4H8M4 8v1.5A1.6 1.6 0 1 1 2.5 8H4M8 8v1.5A1.6 1.6 0 1 0 9.5 8H8"/></g></svg><span>V</span></span></div>
<div class="a menu" style="left:433px;top:403px;line-height:18px;color:#222">Column Selection Mode</div>
<div class="a menu" style="right:358px;top:403px;height:18px;line-height:18px;letter-spacing:0;color:#222;display:flex;align-items:center"><span style="display:flex;align-items:center;margin-top:-1px"><svg width="13" height="12" style="margin-right:1px;margin-top:-1px"><path d="M6.5 0.8l5.6 5.8H9.2v4.4H3.8V6.6H0.9z" fill="none" stroke="#222" stroke-width="1.05" stroke-linejoin="round"/></svg><svg width="12" height="12" style="margin-right:1px;margin-top:-1px"><g fill="none" stroke="#222" stroke-width="1.1"><path d="M4 4h4v4H4z"/><path d="M4 4V2.5A1.6 1.6 0 1 0 2.5 4H4M8 4V2.5A1.6 1.6 0 1 1 9.5 4H8M4 8v1.5A1.6 1.6 0 1 1 2.5 8H4M8 8v1.5A1.6 1.6 0 1 0 9.5 8H8"/></g></svg><span>8</span></span></div>
<div class="a" style="left:406px;top:428px;width:275px;height:1px;background:#d8d8d8"></div>
<div class="a menu" style="left:433px;top:436px;line-height:18px;color:#222">Find Usages</div>
<div class="a menu" style="right:358px;top:436px;height:18px;line-height:18px;letter-spacing:0;color:#222;display:flex;align-items:center"><span style="display:flex;align-items:center;margin-top:-1px"><svg width="13" height="12" style="margin-right:1px;margin-top:-1px"><path d="M0.5 1.2h4.3l5.3 9.8h1.8M7.2 1.2h5" fill="none" stroke="#222" stroke-width="1.15"/></svg><span>F</span><span>7</span></span></div>
<div class="a menu" style="left:433px;top:457px;line-height:18px;color:#222">Refactor</div>
<svg class="a" style="left:660px;top:459px" width="10" height="12"><path d="M1 1v10l8-5z" fill="#2a2a2a"/></svg>
<div class="a" style="left:406px;top:482px;width:275px;height:1px;background:#d8d8d8"></div>
<div class="a menu" style="left:433px;top:490px;line-height:18px;color:#222">Folding</div>
<svg class="a" style="left:660px;top:492px" width="10" height="12"><path d="M1 1v10l8-5z" fill="#2a2a2a"/></svg>
<div class="a" style="left:406px;top:515px;width:275px;height:1px;background:#d8d8d8"></div>
<div class="a menu" style="left:433px;top:523px;line-height:18px;color:#222">Search with Google</div>
<div class="a" style="left:406px;top:548px;width:275px;height:1px;background:#d8d8d8"></div>
<div class="a menu" style="left:433px;top:556px;line-height:18px;color:#222">Go To</div>
<svg class="a" style="left:660px;top:558px" width="10" height="12"><path d="M1 1v10l8-5z" fill="#2a2a2a"/></svg>
<div class="a menu" style="left:433px;top:578px;line-height:18px;color:#8a8a8a">Generate...</div>
<div class="a menu" style="right:358px;top:578px;height:18px;line-height:18px;letter-spacing:0;color:#8a8a8a;display:flex;align-items:center"><span style="display:flex;align-items:center;margin-top:-1px"><svg width="12" height="12" style="margin-right:1px;margin-top:-1px"><g fill="none" stroke="#8a8a8a" stroke-width="1.1"><path d="M4 4h4v4H4z"/><path d="M4 4V2.5A1.6 1.6 0 1 0 2.5 4H4M8 4V2.5A1.6 1.6 0 1 1 9.5 4H8M4 8v1.5A1.6 1.6 0 1 1 2.5 8H4M8 8v1.5A1.6 1.6 0 1 0 9.5 8H8"/></g></svg><span>N</span></span></div>
<div class="a" style="left:406px;top:603px;width:275px;height:1px;background:#d8d8d8"></div>
<div class="a menu" style="left:433px;top:610px;line-height:18px;color:#222">Local History</div>
<svg class="a" style="left:660px;top:612px" width="10" height="12"><path d="M1 1v10l8-5z" fill="#2a2a2a"/></svg>
<div class="a menu" style="left:433px;top:631px;line-height:18px;color:#222">Git</div>
<svg class="a" style="left:660px;top:633px" width="10" height="12"><path d="M1 1v10l8-5z" fill="#2a2a2a"/></svg>
<div class="a" style="left:406px;top:657px;width:275px;height:1px;background:#d8d8d8"></div>
<div class="a" style="left:406px;top:663px;width:275px;height:20px;background:#3d78d8"></div>
<div class="a menu" style="left:433px;top:664px;line-height:18px;color:#fff;-webkit-text-stroke:.45px #fff">External Tools</div>
<svg class="a" style="left:660px;top:666px" width="10" height="12"><path d="M1 1v10l8-5z" fill="#fff"/></svg>
<div class="a menu" style="left:433px;top:685px;line-height:18px;color:#222">Compare with Clipboard</div>
<div class="a menu" style="left:433px;top:706px;line-height:18px;color:#222">File Encoding</div>
<div class="a" style="left:406px;top:732px;width:275px;height:1px;background:#d8d8d8"></div>
<div class="a menu" style="left:433px;top:739px;line-height:18px;color:#222">Create Gist...</div>
<svg class="a" style="left:412px;top:740px" width="14" height="14"><circle cx="7" cy="7" r="6.5" fill="#5a5a5a"/><circle cx="7" cy="7" r="5" fill="#f3f3f3"/><path d="M4 11v-3a3 3 0 0 1 6 0v3zM4.2 5l.8-2 1.3 1.5h1.4L9 3l.8 2" fill="#5a5a5a"/></svg>
<div class="a" style="left:681px;top:659px;width:229px;height:70px;background:rgba(244,244,244,.95);box-shadow:0 3px 10px rgba(0,0,0,.25),0 0 0 .5px rgba(0,0,0,.12);border-radius:0 4px 4px 4px"></div>
<div class="a" style="left:681px;top:663px;width:229px;height:20px;background:#3d78d8"></div>
<div class="a menu" style="left:708px;top:665px;line-height:18px;letter-spacing:-.2px;color:#fff;-webkit-text-stroke:.45px #fff">Robot Run SingleTestCase</div>
<div class="a menu" style="left:708px;top:686px;line-height:18px;letter-spacing:-.2px">Robot Run TestSuite</div>
<div class="a menu" style="left:708px;top:707px;line-height:18px;letter-spacing:-.2px">Robot Run Selected Tag</div>
<div class="a" style="left:308px;top:238px;width:174px;height:24px;border:3.5px solid #e8141c;border-radius:6px;box-shadow:0 1px 3px rgba(0,0,0,.25)"></div>
<div class="a" style="left:419px;top:660px;width:205px;height:29px;border:3.5px solid #e8141c;border-radius:6px;box-shadow:0 1px 3px rgba(0,0,0,.25)"></div>
<div class="a" style="left:693px;top:655px;width:209px;height:37px;border:3.5px solid #e8141c;border-radius:6px;box-shadow:0 1px 3px rgba(0,0,0,.25)"></div>
</body></html>
